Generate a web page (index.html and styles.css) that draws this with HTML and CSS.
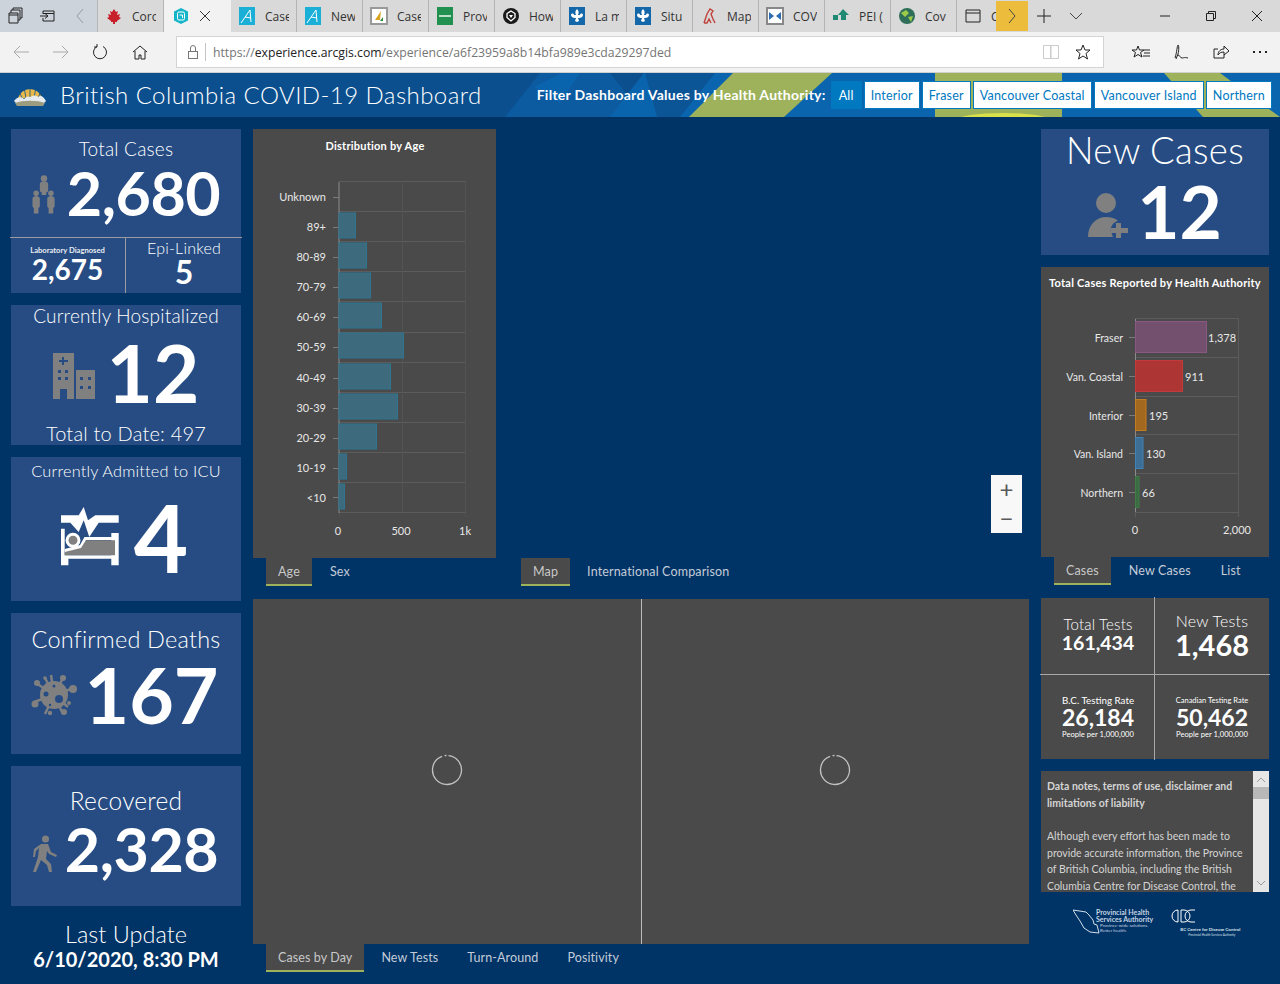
FILE: index.html
```html
<!DOCTYPE html>
<html lang="en">
<head>
    <meta charset="UTF-8">
    <title>British Columbia COVID-19 Dashboard</title>
    <link rel="stylesheet" href="styles.css">
</head>
<body>
    <div class="tabbar">
        <div class="tab-tools">
            <svg width="20" height="20" viewBox="0 0 20 20"><path d="M3 7h9v10H3zM5 7V4h9v10h-2M7 4V2h9v10h-2" fill="none" stroke="#222"/><path d="M3 9h9" stroke="#222"/></svg>
            <svg width="20" height="20" viewBox="0 0 20 20"><path d="M5 5h11v10H5v-3M5 8V5M2 10h8M7 7.500l3 2.500-3 2.500" fill="none" stroke="#222"/><path d="M5 7.500h11" stroke="#222"/></svg>
            <svg width="14" height="20" viewBox="0 0 14 20"><path d="M10 3L4 10l6 7" fill="none" stroke="#999"/></svg>
        </div>
        <div class="tab"><svg width="16" height="16" viewBox="0 0 16 16"><path d="M8 1l2 3 2-1-1 4 3-1-1 3 2 1-4 3v1H9v2H7v-2H5v-1L1 10l2-1-1-3 3 1-1-4 2 1z" fill="#c8202a"/></svg><span>Coro</span></div>
        <div class="tab tab-active"><svg width="16" height="18" viewBox="0 0 16 18"><path d="M8 1l7 3.500v9L8 17l-7-3.500v-9z" fill="#14b5c9"/><rect x="4.500" y="5" width="7" height="8" rx="1.500" fill="none" stroke="#fff"/><path d="M6.500 8h3v3" fill="none" stroke="#fff"/></svg><svg class="tab-close" width="12" height="12" viewBox="0 0 12 12"><path d="M1 1l10 10M11 1L1 11" stroke="#333"/></svg></div>
        <div class="tab"><svg width="16" height="18" viewBox="0 0 16 18"><rect width="16" height="18" fill="#19afd6"/><path d="M2 16L11 3l1 12M6 10l6 1" fill="none" stroke="#fff"/></svg><span>Case</span></div>
        <div class="tab"><svg width="16" height="18" viewBox="0 0 16 18"><rect width="16" height="18" fill="#19afd6"/><path d="M2 16L11 3l1 12M6 10l6 1" fill="none" stroke="#fff"/></svg><span>New</span></div>
        <div class="tab"><svg width="18" height="18" viewBox="0 0 18 18"><rect x="1" y="1" width="16" height="16" fill="#fff" stroke="#999" stroke-width="2"/><path d="M5 13L11 4l-1 9z" fill="#d9a520"/><path d="M10 14l3-4v4z" fill="#2c8a3c"/></svg><span>Case</span></div>
        <div class="tab"><svg width="16" height="18" viewBox="0 0 16 18"><rect width="16" height="18" fill="#20914f"/><path d="M2 8h12v2H2z" fill="#bfe0c8"/></svg><span>Prov</span></div>
        <div class="tab"><svg width="16" height="16" viewBox="0 0 16 16"><circle cx="8" cy="8" r="8" fill="#1a1a1a"/><path d="M8 3l4 2.500v4L8 13 4 9.500v-4z" fill="none" stroke="#fff" stroke-width="1.300"/><path d="M6 7h4L8 10z" fill="#fff"/></svg><span>How</span></div>
        <div class="tab"><svg width="16" height="18" viewBox="0 0 16 18"><rect width="16" height="18" fill="#1467a8"/><path d="M8 2c2 2 2 4 1 6h2c0-2 3-2 3 0s-2 3-4 3H9l1 3-2 1-2-1 1-3H6c-2 0-4-1-4-3s3-2 3 0h2C6 6 6 4 8 2z" fill="#fff"/></svg><span>La m</span></div>
        <div class="tab"><svg width="16" height="18" viewBox="0 0 16 18"><rect width="16" height="18" fill="#1467a8"/><path d="M8 2c2 2 2 4 1 6h2c0-2 3-2 3 0s-2 3-4 3H9l1 3-2 1-2-1 1-3H6c-2 0-4-1-4-3s3-2 3 0h2C6 6 6 4 8 2z" fill="#fff"/></svg><span>Situ</span></div>
        <div class="tab"><svg width="18" height="18" viewBox="0 0 18 18"><path d="M4 16l3-9 3-5 3 2-2 3 2 5 2 4M4 16h3l2-4 2 4" fill="none" stroke="#c0403a" stroke-width="1.400"/></svg><span>Map</span></div>
        <div class="tab"><svg width="18" height="18" viewBox="0 0 18 18"><rect x="1" y="1" width="16" height="16" fill="#fff" stroke="#888" stroke-width="2"/><path d="M3 5l5 4-5 4zM15 5l-5 4 5 4z" fill="#2c6fb0"/></svg><span>COV</span></div>
        <div class="tab"><svg width="18" height="16" viewBox="0 0 18 16"><path d="M11 1l6 6h-3v5H9V7H6zM1 7h5v5H1z" fill="#1f8a74"/></svg><span>PEI (</span></div>
        <div class="tab"><svg width="16" height="16" viewBox="0 0 16 16"><circle cx="8" cy="8" r="8" fill="#2f6f5a"/><path d="M2 5l5-3 3 3-4 4zM9 9l5-1-2 6z" fill="#9ccb4a"/></svg><span>Cov</span></div>
        <div class="tab tab-last"><svg width="16" height="16" viewBox="0 0 16 16"><path d="M1 2h14v12H1zM1 5h14" fill="none" stroke="#222"/></svg><span>C</span></div>
        <div class="tab-more"><svg width="10" height="18" viewBox="0 0 10 18"><path d="M2 2l6 7-6 7" fill="none" stroke="#444"/></svg></div>
        <div class="tab-add"><svg width="14" height="14" viewBox="0 0 14 14"><path d="M7 0v14M0 7h14" stroke="#222"/></svg></div>
        <div class="tab-add"><svg width="14" height="8" viewBox="0 0 14 8"><path d="M1 1l6 6 6-6" fill="none" stroke="#444"/></svg></div>
        <div class="win-controls">
            <svg width="12" height="12" viewBox="0 0 12 12"><path d="M1 6h10" stroke="#222"/></svg>
            <svg width="12" height="12" viewBox="0 0 12 12"><path d="M1.500 3.500h7v7h-7zM3.500 3.500v-2h7v7h-2" fill="none" stroke="#222"/></svg>
            <svg width="12" height="12" viewBox="0 0 12 12"><path d="M1 1l10 10M11 1L1 11" stroke="#222"/></svg>
        </div>
    </div>

    <div class="addressbar">
        <div class="nav-icons">
            <svg width="18" height="16" viewBox="0 0 18 16"><path d="M17 8H2M8 2L2 8l6 6" fill="none" stroke="#aaa"/></svg>
            <svg width="18" height="16" viewBox="0 0 18 16"><path d="M1 8h15M10 2l6 6-6 6" fill="none" stroke="#aaa"/></svg>
            <svg width="16" height="18" viewBox="0 0 16 18"><path d="M5 3.500a6.500 6.500 0 1 0 6 0M5 1v3H2" fill="none" stroke="#222"/></svg>
            <svg class="nav-home" width="16" height="16" viewBox="0 0 16 16"><path d="M1 8l7-6 7 6M3 7v8h4v-4h2v4h4V7" fill="none" stroke="#222"/></svg>
        </div>
        <div class="urlbox">
            <svg width="14" height="16" viewBox="0 0 14 16"><rect x="2.500" y="7.500" width="9" height="7" fill="none" stroke="#777"/><path d="M4.500 7.500V4a2.500 2.500 0 0 1 5 0v3.500" fill="none" stroke="#777"/></svg>
            <span class="url-sep"></span>
            <span class="url">https://<b>experience.arcgis.com</b>/experience/a6f23959a8b14bfa989e3cda29297ded</span>
            <svg class="url-book" width="16" height="16" viewBox="0 0 16 16"><path d="M.5 1.500h7v13h-7zM8 1.500h7.500v13H8z" fill="none" stroke="#ccc"/></svg>
            <svg width="16" height="16" viewBox="0 0 16 16"><path d="M8 1l2 5h5l-4 3.500 1.500 5.500L8 12l-4.500 3L5 9.500 1 6h5z" fill="none" stroke="#222"/></svg>
        </div>
        <div class="bar-icons">
            <svg width="18" height="16" viewBox="0 0 18 16"><path d="M6 2l1.500 4H12L8.500 8.500 10 13 6 10.500 2 13l1.500-4.500L0 6h4.500zM12 6h6M12 9h6M11 12h7" fill="none" stroke="#222"/></svg>
            <svg width="18" height="18" viewBox="0 0 18 18"><path d="M3 15C5 9 5 3 6 2c1 0 1 5 0 9l-2 5M6 12c2 0 2 3 4 3s2-1 6 0" fill="none" stroke="#222"/></svg>
            <svg width="18" height="16" viewBox="0 0 18 16"><path d="M2 5h4M2 5v9h10v-3M6 11c0-4 3-6 6-6V2l5 5-5 4V8c-3 0-5 1-6 3z" fill="none" stroke="#222"/></svg>
            <svg width="16" height="4" viewBox="0 0 16 4"><path d="M1 1h2v2H1zM7 1h2v2H7zM13 1h2v2h-2z" fill="#222"/></svg>
        </div>
    </div>

    <header class="topbar">
        <svg class="topbar-bg" width="1280" height="44" viewBox="0 0 1280 44">
            <path d="M505 44L540 0h70l35 44z" fill="#0c5a9f"/>
            <path d="M534 14l28-14h18l-20 30z" fill="#0a64ad"/>
            <path d="M610 44l34-44h80l-30 44z" fill="#0a64ad"/>
            <path d="M645 0h70l-18 44h-40z" fill="#0b5496"/>
            <path d="M680 44l35-44h120l-50 44zM830 0h450v44H690z" fill="#0b64ae"/>
            <path d="M689 44L733 0h99l-48 44z" fill="#9db25a"/>
            <path d="M935 0h127v44H935z" fill="#9db25a"/>
            <ellipse cx="1003" cy="47" rx="46" ry="7" fill="#d8e04a"/>
            <path d="M1164 0h56l60 44h-77z" fill="#9db25a"/>
        </svg>
        <svg class="bc-logo" width="32" height="24" viewBox="0 0 32 24">
            <path d="M4 15a12.500 12.500 0 0 1 24 0z" fill="#e8b84a"/>
            <path d="M8 15L5 8M12 15L10 4M16 15V2M20 15l2-11M24 15l3-7" stroke="#0b4f8e" stroke-width=".8"/>
            <path d="M0 18c4-5 8-4 10-2 3-3 4-3 6-2 3-2 6-2 8 0 3-2 5-1 8 4l-2 2H2z" fill="#e6ebf0"/>
            <path d="M1 20c8-3 22-3 30 0l-2 3H3z" fill="#9c9c7e"/>
        </svg>
        <h1>British Columbia COVID-19 Dashboard</h1>
        <div class="filter">
            <span class="filter-label">Filter Dashboard Values by Health Authority:</span>
            <a class="filter-btn filter-all">All</a>
            <a class="filter-btn">Interior</a>
            <a class="filter-btn">Fraser</a>
            <a class="filter-btn">Vancouver Coastal</a>
            <a class="filter-btn">Vancouver Island</a>
            <a class="filter-btn">Northern</a>
        </div>
    </header>

    <main class="dashboard">
        <section class="col-left">
            <div class="card card-total">
                <div class="total-top">
                    <div class="card-title t-19">Total Cases</div>
                    <div class="stat-row total-row">
                        <svg class="icon" width="24" height="44" viewBox="0 0 26 44">
                            <g fill="#808080">
                                <circle cx="13" cy="4" r="3.500"/><path d="M8.500 10c0-2 2-3 4.500-3s4.500 1 4.500 3v7c0 1-1 2-2 2v3h-5v-3c-1 0-2-1-2-2z"/>
                                <circle cx="4.500" cy="20" r="3"/><path d="M.5 26c0-2 2-3 4-3s4 1 4 3v8c0 1-1 2-1.500 2v6H2v-6c-.5 0-1.500-1-1.500-2z"/>
                                <circle cx="20.500" cy="20" r="3"/><path d="M16.500 26c0-2 2-3 4-3s4 1 4 3v8c0 1-1 2-1.500 2v6h-5v-6c-.5 0-1.500-1-1.500-2z"/>
                            </g>
                        </svg>
                        <span class="num num-61">2,680</span>
                    </div>
                </div>
                <div class="total-split">
                    <div class="split-cell">
                        <div class="tiny-title">Laboratory Diagnosed</div>
                        <div class="num num-29">2,675</div>
                    </div>
                    <div class="split-cell split-right">
                        <div class="card-title t-16">Epi-Linked</div>
                        <div class="num num-32">5</div>
                    </div>
                </div>
            </div>

            <div class="card card-hosp">
                <div class="card-title t-19">Currently Hospitalized</div>
                <div class="stat-row hosp-row">
                    <svg class="icon" width="42" height="46" viewBox="0 0 42 46">
                        <path fill="#808080" fill-rule="evenodd" d="M0 0h21v46H14v-10H7v10H0zM9 4v3H6v2h3v3h2V9h4V7h-4V4zM5 17v3h3v-3zM12 17v3h3v-3zM5 24v3h3v-3zM12 24v3h3v-3zM23 17h19v29H23zM27 24v3h3v-3zM35 24v3h3v-3zM27 33v3h3v-3zM35 33v3h3v-3z"/>
                    </svg>
                    <span class="num num-81">12</span>
                </div>
                <div class="card-title t-20 hosp-foot">Total to Date: 497</div>
            </div>

            <div class="card card-icu">
                <div class="card-title t-17">Currently Admitted to ICU</div>
                <div class="stat-row icu-row">
                    <svg class="icon" width="58" height="60" viewBox="0 0 58 60">
                        <path d="M0 8.300h17.700L22.700 0 27 13.300l7.300-5H57.700v7.400H37.700L28.300 30 22.700 13.300 17.700 25 9.300 15.700H0z" fill="#fff"/>
                        <path d="M0 21.700h3.700V48.300H50.300V26h7.400v32.300H50.300v-6.600H7.400v6.600H0z" fill="#fff"/>
                        <path d="M3.700 44L19.300 40 24.300 33.300H54V48.300H3.700z" fill="#808080"/>
                        <path d="M3.700 42L19 38 23.500 30H54v3H25L20 41 3.700 45z" fill="#fff"/>
                        <circle cx="12" cy="33.300" r="6" fill="#808080" stroke="#fff" stroke-width="3"/>
                    </svg>
                    <span class="num num-92">4</span>
                </div>
            </div>

            <div class="card card-deaths">
                <div class="card-title t-23">Confirmed Deaths</div>
                <div class="stat-row deaths-row">
                    <svg class="icon" width="46" height="42" viewBox="0 0 46 42">
                        <g stroke="#808080" stroke-width="2.500">
                            <path d="M23 21L5 9M23 21l-9-17M23 21l9-17M23 21l17-6M23 21L3 28M23 21l-9 19M23 21l9 19M23 21l14 12M23 21l-3-20"/>
                        </g>
                        <g fill="#808080">
                            <circle cx="23" cy="21" r="14"/><circle cx="6" cy="9" r="3"/><circle cx="14" cy="4" r="1.800"/><circle cx="32" cy="4" r="3"/><circle cx="42" cy="15" r="4"/><circle cx="4" cy="30" r="3.500"/><circle cx="19" cy="39" r="2.200"/><circle cx="33" cy="38" r="3"/><circle cx="38" cy="29" r="2"/>
                        </g>
                        <g fill="#264c83"><circle cx="28" cy="25" r="4"/><circle cx="15" cy="20" r="2.500"/><circle cx="23" cy="12" r="1.500"/><circle cx="19" cy="31" r="1.200"/></g>
                    </svg>
                    <span class="num num-75">167</span>
                </div>
            </div>

            <div class="card card-recovered">
                <div class="card-title t-23 t-recov">Recovered</div>
                <div class="stat-row recov-row">
                    <svg class="icon" width="26" height="38" viewBox="0 0 26 38">
                        <circle cx="13.500" cy="4" r="3.500" fill="#808080"/>
                        <path d="M9 9h7l3 8 6 3-1 2-7-3-2-3-1 8 5 5 1 8h-3l-2-7-6-5-5 12H1l5-15 1-9-3 3-1 6H1l1-8z" fill="#808080"/>
                    </svg>
                    <span class="num num-61">2,328</span>
                </div>
            </div>

            <div class="last-update">
                <div class="last-title">Last Update</div>
                <div class="last-date">6/10/2020, 8:30 PM</div>
            </div>
        </section>

        <section class="col-center">
            <div class="center-top">
                <div class="age-block">
                    <div class="panel age-panel">
                        <svg width="243" height="429" viewBox="0 0 243 429" class="chart">
                            <text x="122" y="21" class="chart-title" text-anchor="middle">Distribution by Age</text>
                            <g class="grid">
                                <path d="M86 52.500h126M86 82.500h126M86 112.500h126M86 142.500h126M86 172.500h126M86 203.500h126M86 233.500h126M86 263.500h126M86 293.500h126M86 323.500h126M86 353.500h126M86 383.500h126"/>
                                <path class="grid-v" d="M149.500 52v332M212.500 52v336M86.500 384v4"/>
                                <path class="ticks" d="M80 68.500h6M80 98.500h6M80 128.500h6M80 158.500h6M80 188.500h6M80 218.500h6M80 249.500h6M80 279.500h6M80 309.500h6M80 339.500h6M80 368.500h6"/>
                            </g>
                            <path d="M86 53v331" stroke="#8a8a8a" stroke-width="1" class="axis"/>
                            <g class="bar-age">
                                <rect x="86" y="84" width="16.500" height="25"/>
                                <rect x="86" y="114" width="27.500" height="25"/>
                                <rect x="86" y="144" width="31.500" height="25"/>
                                <rect x="86" y="174" width="42.500" height="25"/>
                                <rect x="86" y="204" width="64.500" height="25"/>
                                <rect x="86" y="235" width="51.500" height="25"/>
                                <rect x="86" y="265" width="58.500" height="25"/>
                                <rect x="86" y="295" width="37.500" height="25"/>
                                <rect x="86" y="325" width="7.500" height="25"/>
                                <rect x="86" y="355" width="5.500" height="25"/>
                            </g>
                            <g class="axis-text" text-anchor="end">
                                <text x="73" y="72">Unknown</text>
                                <text x="73" y="102">89+</text>
                                <text x="73" y="132">80-89</text>
                                <text x="73" y="162">70-79</text>
                                <text x="73" y="192">60-69</text>
                                <text x="73" y="222">50-59</text>
                                <text x="73" y="253">40-49</text>
                                <text x="73" y="283">30-39</text>
                                <text x="73" y="313">20-29</text>
                                <text x="73" y="343">10-19</text>
                                <text x="73" y="373">&lt;10</text>
                            </g>
                            <g class="axis-text" text-anchor="middle">
                                <text x="85" y="406">0</text>
                                <text x="148" y="406">500</text>
                                <text x="212" y="406">1k</text>
                            </g>
                        </svg>
                    </div>
                    <div class="tabs tabs-age">
                        <span class="tab-link is-active">Age</span>
                        <span class="tab-link">Sex</span>
                    </div>
                </div>
                <div class="map-block">
                    <div class="map-area">
                        <div class="zoom-ctl"><span>+</span><span>−</span></div>
                    </div>
                    <div class="tabs tabs-map">
                        <span class="tab-link is-active">Map</span>
                        <span class="tab-link">International Comparison</span>
                    </div>
                </div>
            </div>
            <div class="center-bottom">
                <div class="panel day-panel">
                    <div class="day-cell">
                        <svg class="spinner" width="32" height="32" viewBox="0 0 32 32"><circle cx="16" cy="16" r="14.500" transform="rotate(-84 16 16)" stroke-dasharray="84 2.500 2 2.600"/></svg>
                    </div>
                    <div class="day-cell day-cell-right">
                        <svg class="spinner" width="32" height="32" viewBox="0 0 32 32"><circle cx="16" cy="16" r="14.500" transform="rotate(-84 16 16)" stroke-dasharray="84 2.500 2 2.600"/></svg>
                    </div>
                </div>
                <div class="tabs tabs-day">
                    <span class="tab-link is-active">Cases by Day</span>
                    <span class="tab-link">New Tests</span>
                    <span class="tab-link">Turn-Around</span>
                    <span class="tab-link">Positivity</span>
                </div>
            </div>
        </section>

        <section class="col-right">
            <div class="card card-new">
                <div class="new-title">New Cases</div>
                <div class="stat-row new-row">
                    <svg class="icon" width="40" height="45" viewBox="0 0 40 45">
                        <circle cx="18" cy="10" r="10" fill="#808080"/>
                        <path d="M0 44c0-12 8-20 18-20 5 0 9 1 12 4-5 1-8 6-7 11l2 5z" fill="#808080"/>
                        <path d="M28 30h5v5h7v5h-7v5h-5v-5h-5v-5h5z" fill="#808080"/>
                    </svg>
                    <span class="num num-new">12</span>
                </div>
            </div>

            <div class="right-chart">
                <div class="panel ha-panel">
                    <svg width="228" height="290" viewBox="0 0 228 290" class="chart">
                        <text x="114" y="20" class="chart-title" text-anchor="middle">Total Cases Reported by Health Authority</text>
                        <g class="grid">
                            <path d="M94 51.500h103M94 90.500h103M94 129.500h103M94 167.500h103M94 206.500h103M94 245.500h103"/>
                            <path d="M197.500 51v199M94.500 245v5"/>
                            <path class="ticks" d="M88 70.500h6M88 109.500h6M88 148.500h6M88 186.500h6M88 225.500h6"/>
                        </g>
                        <path d="M94.500 52v193" stroke="#8a8a8a" class="axis"/>
                        <rect x="94.500" y="54.500" width="71" height="31" fill="#74506f" stroke="#875883"/>
                        <rect x="94.500" y="93.500" width="47" height="31" fill="#ad3534" stroke="#c23a3a"/>
                        <rect x="94.500" y="132.500" width="10.500" height="31" fill="#a3681f" stroke="#c47c20"/>
                        <rect x="94.500" y="170.500" width="7.500" height="31" fill="#3d6e96" stroke="#3f82b5"/>
                        <rect x="94.500" y="209.500" width="3.500" height="31" fill="#3a6b42" stroke="#3f7d47"/>
                        <g class="axis-text ha-labels" text-anchor="end">
                            <text x="82" y="75">Fraser</text>
                            <text x="82" y="114">Van. Coastal</text>
                            <text x="82" y="153">Interior</text>
                            <text x="82" y="191">Van. Island</text>
                            <text x="82" y="230">Northern</text>
                        </g>
                        <g class="axis-text">
                            <text x="167" y="75">1,378</text>
                            <text x="144" y="114">911</text>
                            <text x="108" y="153">195</text>
                            <text x="105" y="191">130</text>
                            <text x="101" y="230">66</text>
                        </g>
                        <g class="axis-text" text-anchor="middle">
                            <text x="94" y="267">0</text>
                            <text x="196" y="267">2,000</text>
                        </g>
                    </svg>
                </div>
                <div class="tabs tabs-ha">
                    <span class="tab-link is-active">Cases</span>
                    <span class="tab-link">New Cases</span>
                    <span class="tab-link">List</span>
                </div>
            </div>

            <div class="panel tests">
                <div class="test-cell">
                    <div class="test-title t-15">Total Tests</div>
                    <div class="num num-20">161,434</div>
                </div>
                <div class="test-cell cell-up">
                    <div class="test-title t-16">New Tests</div>
                    <div class="num num-30">1,468</div>
                </div>
                <div class="test-cell">
                    <div class="test-title t-9">B.C. Testing Rate</div>
                    <div class="num num-24">26,184</div>
                    <div class="test-note">People per 1,000,000</div>
                </div>
                <div class="test-cell">
                    <div class="test-title t-7">Canadian Testing Rate</div>
                    <div class="num num-24">50,462</div>
                    <div class="test-note">People per 1,000,000</div>
                </div>
            </div>

            <div class="notes">
                <div class="notes-text">
                    <p class="notes-head">Data notes, terms of use, disclaimer and limitations of liability</p>
                    <p>Although every effort has been made to provide accurate information, the Province of British Columbia, including the British Columbia Centre for Disease Control, the</p>
                </div>
                <div class="scroll">
                    <svg width="10" height="6" viewBox="0 0 10 6"><path d="M1 5l4-4 4 4" fill="none" stroke="#999"/></svg>
                    <span class="scroll-thumb"></span>
                    <svg class="scroll-down" width="10" height="6" viewBox="0 0 10 6"><path d="M1 1l4 4 4-4" fill="none" stroke="#999"/></svg>
                </div>
            </div>

            <div class="logos">
                <div class="logo-phsa">
                    <svg width="27" height="25" viewBox="0 0 27 25"><path d="M0 1l13 2 3 3 4 5 1 4 3 1 2 8-9-1-6-4-4-7-4-6z" fill="none" stroke="#d5dfea"/></svg>
                    <div>
                        <div class="phsa-name">Provincial Health<br>Services Authority</div>
                        <div class="phsa-sub">Province-wide solutions.<br>Better health.</div>
                    </div>
                </div>
                <div class="logo-cdc">
                    <svg width="26" height="14" viewBox="0 0 26 14"><path d="M8 1a6 6 0 1 0 0 12M8 1v12M11 1h3a6 6 0 0 1 0 12h-3z" fill="none" stroke="#fff"/><path d="M25 1h-4a6 6 0 0 0 0 12h4" fill="none" stroke="#fff"/></svg>
                    <div class="cdc-name">BC Centre for Disease Control</div>
                    <div class="cdc-sub">Provincial Health Services Authority</div>
                </div>
            </div>
        </section>
    </main>
</body>
</html>
```

FILE: styles.css
```css
* {
    box-sizing: border-box;
}

html, body {
    margin: 0;
    padding: 0;
    height: 984px;
    overflow: hidden;
}

body {
    width: 1280px;
    background-color: #003366;
    font-family: 'Lato', sans-serif;
    color: #fff;
}

/* browser chrome */
.tabbar {
    height: 32px;
    display: flex;
    align-items: stretch;
    background-color: #d9d9d9;
    font-family: 'Open Sans', sans-serif;
    font-size: 12px;
    color: #333;
}

.tab-tools {
    width: 98px;
    display: flex;
    align-items: center;
    gap: 12px;
    padding-left: 6px;
    background-color: #ccd3da;
    border-right: 1px solid #b5b5b5;
}

.tab-tools svg:last-child {
    margin-left: 3px;
}

.tab {
    width: 66px;
    display: flex;
    align-items: center;
    gap: 9px;
    padding-left: 7px;
    border-right: 1px solid #b5b5b5;
    overflow: hidden;
    white-space: nowrap;
}

.tab svg {
    flex-shrink: 0;
    width: 18px;
}

.tab span {
    width: 24px;
    overflow: hidden;
}

.tab-active {
    width: 67px;
    padding-left: 8px;
    background-color: #f2f2f2;
    border-right: 0;
}

.tab-active .tab-close {
    width: 12px;
}

.tab-last {
    width: 39px;
    border-right: 0;
    padding-left: 7px;
}

.tab-last span {
    width: 6px;
}

.tab-more {
    width: 32px;
    margin: 1px 0;
    display: flex;
    align-items: center;
    justify-content: center;
    background-color: #ecbc3c;
}

.tab-add {
    width: 32px;
    display: flex;
    align-items: center;
    justify-content: center;
}

.win-controls {
    margin-left: auto;
    width: 138px;
    display: flex;
    align-items: center;
    justify-content: space-between;
    padding: 0 17px;
}

.addressbar {
    height: 41px;
    display: flex;
    align-items: center;
    background-color: #f2f2f2;
    border-bottom: 1px solid #cfcfcf;
    font-family: 'Open Sans', sans-serif;
}

.nav-icons {
    width: 176px;
    display: flex;
    align-items: center;
    gap: 22px;
    padding-left: 12px;
}

.nav-home {
    margin-left: 2px;
}

.urlbox {
    width: 928px;
    height: 32px;
    display: flex;
    align-items: center;
    padding: 0 12px 0 9px;
    background-color: #fff;
    border: 1px solid #d4d4d4;
}

.url-sep {
    width: 1px;
    height: 18px;
    margin: 0 7px 0 5px;
    background-color: #c4c4c4;
}

.url {
    font-size: 12.230px;
    color: #757575;
}

.url b {
    font-weight: 400;
    color: #222;
}

.url-book {
    margin-left: auto;
    margin-right: 16px;
}

.bar-icons {
    flex: 1;
    display: flex;
    align-items: center;
    justify-content: space-between;
    padding: 0 12px 0 28px;
}

/* dashboard header */
.topbar {
    position: relative;
    height: 44px;
    display: flex;
    align-items: center;
    background-color: #0b4f8e;
    overflow: hidden;
}

.topbar-bg {
    position: absolute;
    left: 0;
    top: 0;
}

.bc-logo {
    position: relative;
    margin-left: 14px;
}

.topbar h1 {
    position: relative;
    margin: 0 0 2px 14px;
    font-size: 24px;
    font-weight: 300;
    letter-spacing: .44px;
    white-space: nowrap;
}

.filter {
    position: absolute;
    right: 8px;
    top: 8px;
    display: flex;
    align-items: center;
    gap: 2px;
}

.filter-label {
    margin: 0 3px 2px 0;
    font-size: 14px;
    font-weight: 700;
    letter-spacing: .27px;
    white-space: nowrap;
}

.filter-btn {
    height: 28px;
    padding: 0 6px;
    display: flex;
    align-items: center;
    justify-content: center;
    background-color: #fff;
    border: 1px solid #0079c1;
    color: #0079c1;
    font-size: 12.500px;
    letter-spacing: .2px;
    white-space: nowrap;
}

.filter-all {
    width: 31px;
    padding: 0;
    background-color: #0079c1;
    color: #fff;
}

/* main grid */
.dashboard {
    display: grid;
    grid-template-columns: 230px 776px 228px;
    column-gap: 12px;
    padding: 12px 11px 0;
}

.col-left, .col-right {
    display: flex;
    flex-direction: column;
}

.card {
    background-color: #264c83;
    text-align: center;
}

.col-left .card {
    margin-bottom: 12px;
}

.card-title {
    font-weight: 300;
    letter-spacing: .2px;
    line-height: 1.2;
}

.t-16 { font-size: 16px; }
.t-17 { font-size: 16.300px; }
.t-19 { font-size: 19px; }
.t-20 { font-size: 20px; }
.t-23 { font-size: 23.500px; }
.t-recov { font-size: 24.500px; }

.stat-row {
    display: flex;
    align-items: center;
    justify-content: center;
}

.num {
    font-weight: 700;
    line-height: 1;
}

.num-61 { font-size: 61px; letter-spacing: -.5px; }
.num-81 { font-size: 80px; }
.num-92 { font-size: 94px; }
.num-75 { font-size: 77px; }
.num-new { font-size: 73px; }
.num-29 { font-size: 28px; }
.num-32 { font-size: 32px; }
.num-30 { font-size: 29px; }
.num-24 { font-size: 23px; }
.num-20 { font-size: 19.500px; }

/* total cases card */
.card-total {
    height: 164px;
}

.total-top {
    height: 108px;
    padding-top: 9px;
}

.total-row {
    gap: 11px;
    margin-top: 1px;
}

.total-row .icon {
    margin-top: 6px;
}

.total-split {
    height: 56px;
    margin: 0 -1px;
    display: flex;
    border-top: 1px solid #9c9c9c;
}

.split-cell {
    width: 115px;
    padding-top: 8px;
}

.split-right {
    flex: 1;
    padding-top: 0;
    border-left: 1px solid #9c9c9c;
}

.split-right .num {
    margin-top: -1px;
}

.tiny-title {
    font-size: 7.600px;
    line-height: 8px;
    margin-bottom: 1px;
    font-weight: 700;
    opacity: .9;
}

/* the other left cards */
.card-hosp {
    height: 140px;
}

.hosp-row {
    height: 90px;
    gap: 12px;
    margin-top: -1px;
}

.hosp-row .icon {
    margin-top: 9px;
}

.hosp-foot {
    margin-top: 4px;
}

.card-icu {
    height: 144px;
    padding-top: 4px;
}

.icu-row {
    gap: 15px;
    margin-top: 9px;
    padding-right: 3px;
}

.card-deaths {
    height: 141px;
    padding-top: 12px;
}

.deaths-row {
    gap: 8px;
    margin-top: 3px;
    padding-right: 3px;
}

.card-recovered {
    height: 140px;
    padding-top: 20px;
}

.recov-row {
    gap: 7px;
    margin-top: 3px;
    padding-right: 2px;
}

.recov-row .icon {
    margin-top: 10px;
}

.last-update {
    text-align: center;
    padding-top: 2px;
}

.last-title {
    font-size: 23.500px;
    font-weight: 300;
    line-height: 28px;
}

.last-date {
    font-size: 20px;
    font-weight: 700;
    line-height: 22px;
}

/* panels and charts */
.panel {
    background-color: #4a4a4a;
}

.chart {
    display: block;
    font-family: 'Lato', sans-serif;
}

.chart-title {
    font-size: 11px;
    font-weight: 700;
    fill: #fff;
    letter-spacing: .24px;
}

.axis-text text {
    font-size: 11px;
    fill: #e8e8e8;
}

.ha-labels text {
    font-size: 10.500px;
}

.grid path {
    fill: none;
    stroke: #5c5c5c;
}

.grid .grid-v {
    stroke: #535353;
}

.grid .ticks {
    stroke: #7a7a7a;
}

.bar-age rect {
    fill: #3d6a7d;
    stroke: #2f7590;
}

.col-center {
    display: flex;
    flex-direction: column;
    gap: 13px;
}

.center-top {
    display: flex;
    gap: 25px;
    height: 457px;
}

.age-block {
    width: 243px;
}

.age-panel {
    height: 429px;
}

.map-block {
    flex: 1;
    display: flex;
    flex-direction: column;
}

.map-area {
    position: relative;
    height: 429px;
}

.zoom-ctl {
    position: absolute;
    right: 7px;
    top: 346px;
    width: 31px;
    height: 58px;
    display: flex;
    flex-direction: column;
    background-color: #f8f8f8;
    color: #595959;
}

.zoom-ctl span {
    flex: 1;
    display: flex;
    align-items: center;
    justify-content: center;
    padding-bottom: 2px;
    font-size: 24px;
    line-height: 1;
}

.tabs {
    height: 28px;
    display: flex;
    font-size: 12.500px;
    letter-spacing: .15px;
    color: #c3ccd8;
}

.tab-link {
    display: flex;
    align-items: center;
    height: 28px;
    padding: 0 12px 2px;
    white-space: nowrap;
}

.tab-link.is-active {
    padding-bottom: 0;
    background-color: #4a4a4a;
    border-bottom: 2px solid #9db25a;
    color: #c8c8c8;
}

.tabs-age, .tabs-ha {
    padding-left: 13px;
    gap: 6px;
}

.tabs-day {
    padding-left: 13px;
    gap: 5px;
    letter-spacing: .1px;
}

.tabs-map {
    gap: 5px;
}

.day-panel {
    height: 345px;
    display: flex;
}

.day-cell {
    flex: 1;
    display: flex;
    justify-content: center;
    align-items: flex-start;
    padding-top: 155px;
}

.day-cell-right {
    border-left: 1px solid #bdbdbd;
}

.spinner circle {
    fill: none;
    stroke: #c2c2c2;
    stroke-width: 1.300;
}

/* right column */
.card-new {
    height: 126px;
}

.new-title {
    font-size: 36.500px;
    font-weight: 300;
    letter-spacing: .3px;
    line-height: 42px;
}

.new-row {
    gap: 9px;
    margin-top: 4px;
}

.new-row .icon {
    margin-top: 7px;
}

.right-chart {
    margin-top: 12px;
}

.ha-panel {
    height: 290px;
}

.tests {
    position: relative;
    margin-top: 13px;
    height: 161px;
    display: grid;
    grid-template-columns: 1fr 1fr;
    grid-template-rows: 76px 85px;
    text-align: center;
}

.tests::before {
    content: "";
    position: absolute;
    left: 113px;
    top: -1px;
    bottom: -1px;
    width: 1px;
    background-color: #a8a8a8;
}

.tests::after {
    content: "";
    position: absolute;
    left: -1px;
    right: -1px;
    top: 76px;
    height: 1px;
    background-color: #a8a8a8;
}

.test-cell {
    padding-top: 18px;
}

.cell-up {
    padding-top: 14px;
}

.test-cell:nth-child(n+3) {
    padding-top: 21px;
}

.test-title {
    font-weight: 300;
    letter-spacing: .2px;
    line-height: 1.1;
}

.test-cell .t-15 { font-size: 15px; }
.test-cell .t-16 { font-size: 16px; }
.test-cell .t-9 { font-size: 9.800px; font-weight: 400; letter-spacing: 0; }
.test-cell .t-7 { font-size: 7.500px; line-height: 11px; font-weight: 400; letter-spacing: 0; }

.test-note {
    margin-top: 1px;
    font-size: 7.600px;
    line-height: 9px;
}

.notes {
    margin-top: 12px;
    height: 121px;
    display: flex;
    background-color: #4a4a4a;
    color: #d4d4d4;
    font-size: 10.500px;
    line-height: 16.600px;
    overflow: hidden;
}

.notes-text {
    flex: 1;
    padding: 7px 6px 0;
}

.notes-text p {
    margin: 0 0 17px;
}

.notes-head {
    font-weight: 700;
}

.scroll {
    width: 16px;
    display: flex;
    flex-direction: column;
    align-items: center;
    padding-top: 6px;
    background-color: #e6e6e6;
}

.scroll-thumb {
    width: 16px;
    height: 12px;
    margin-top: 4px;
    background-color: #b8b8b8;
}

.scroll-down {
    margin-top: auto;
    margin-bottom: 6px;
}

.logos {
    display: flex;
    align-items: flex-start;
    padding: 17px 0 0 32px;
    gap: 17px;
}

.logo-phsa {
    display: flex;
    color: #c6d3e2;
}

.logo-phsa > div {
    margin-left: -4px;
}

.phsa-name {
    font-size: 7px;
    line-height: 7px;
    font-weight: 700;
    white-space: nowrap;
}

.phsa-sub {
    font-size: 4.500px;
    line-height: 5px;
    margin-left: 4px;
    white-space: nowrap;
}

.logo-cdc {
    color: #dbe3ec;
}

.logo-cdc svg {
    display: block;
}

.cdc-name {
    font-size: 4.500px;
    font-weight: 700;
    line-height: 6px;
    margin: 4px 0 0 10px;
    white-space: nowrap;
}

.cdc-sub {
    font-size: 3px;
    line-height: 4px;
    margin-left: 18px;
    white-space: nowrap;
}
```
